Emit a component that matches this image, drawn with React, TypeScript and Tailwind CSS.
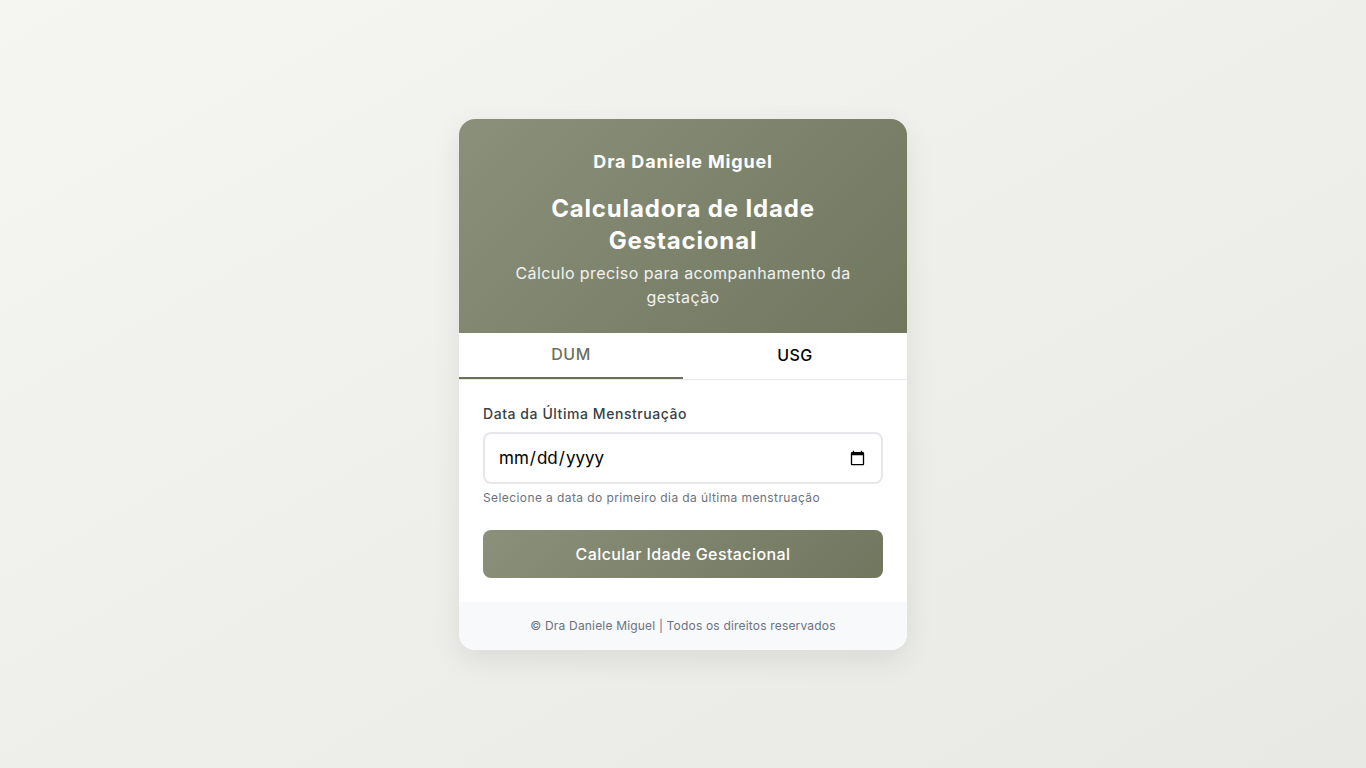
import { useState } from "react";

export default function App() {
  const [tab, setTab] = useState<"dum" | "usg">("dum");

  return (
    <div
      className="min-h-screen w-full flex items-center justify-center bg-gradient-to-br from-[#f5f6f2] to-[#e8e9e4] p-4"
      style={{ fontFamily: "Inter, 'Noto Sans', sans-serif" }}
    >
      <div className="w-full max-w-md bg-white rounded-2xl shadow-[0_10px_30px_rgba(0,0,0,0.08)] overflow-hidden">
        <div className="bg-[linear-gradient(135deg,#8b907a,#71765f)] text-white text-center px-8 pt-8 pb-6">
          <h2 className="text-lg font-bold leading-[22px] mb-5 tracking-[0.045em]">Dra Daniele Miguel</h2>
          <h1 className="text-2xl font-bold leading-8 px-6 tracking-[0.035em]">Calculadora de Idade Gestacional</h1>
          <p className="text-base leading-6 mt-1 text-white/90 px-4 tracking-[0.026em]">
            Cálculo preciso para acompanhamento da gestação
          </p>
        </div>

        <div className="flex border-b border-[#e5e7eb]">
          <button
            onClick={() => setTab("dum")}
            className={
              tab === "dum"
                ? "flex-1 h-[46px] pb-[2px] text-base font-medium text-[#6b705c] border-b-2 border-[#6b705c] -mb-px tracking-[0.03em]"
                : "flex-1 h-[46px] pb-[2px] text-base font-medium text-black tracking-[0.03em]"
            }
          >
            DUM
          </button>
          <button
            onClick={() => setTab("usg")}
            className={
              tab === "usg"
                ? "flex-1 h-[46px] pb-[2px] text-base font-medium text-[#6b705c] border-b-2 border-[#6b705c] -mb-px tracking-[0.03em]"
                : "flex-1 h-[46px] pb-[2px] text-base font-medium text-black tracking-[0.03em]"
            }
          >
            USG
          </button>
        </div>

        <div className="p-6">
          <label className="block text-sm font-medium text-[#3a3f47] mb-2 leading-5 tracking-[0.04em]">
            Data da Última Menstruação
          </label>
          <input
            type="date"
            className="w-full h-[52px] px-[13px] pt-[2px] rounded-lg border-2 border-[#e5e7eb] text-[17px] text-black outline-none"
          />
          <p className="text-xs text-[#6b7280] mt-[6px] leading-4 tracking-[0.034em]">
            Selecione a data do primeiro dia da última menstruação
          </p>
          <button className="w-full h-12 mt-6 rounded-lg bg-[linear-gradient(135deg,#8b907a,#71765f)] text-white text-base font-medium tracking-[0.025em]">
            Calcular Idade Gestacional
          </button>
        </div>

        <div className="bg-[#f8f9fa] h-12 flex items-center justify-center text-xs text-[#6b7280] tracking-[0.015em]">
          © Dra Daniele Miguel | Todos os direitos reservados
        </div>
      </div>
    </div>
  );
}
